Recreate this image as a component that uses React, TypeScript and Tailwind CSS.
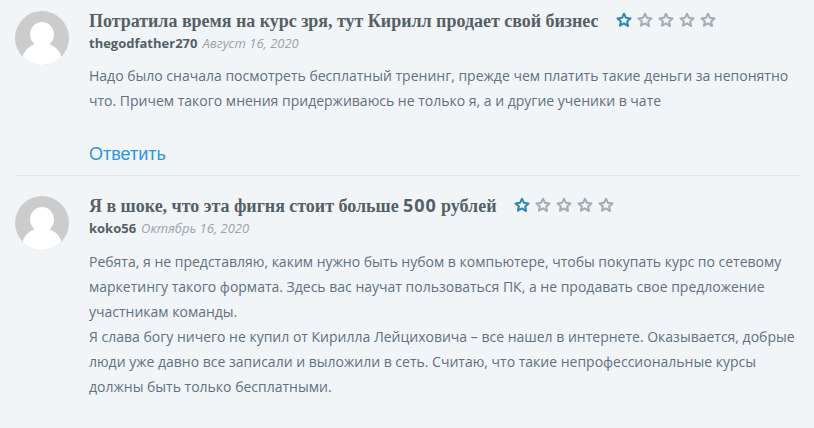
import React from 'react';

const Avatar = () => (
  <div className="w-[54px] h-[54px] shrink-0 rounded-full overflow-hidden bg-[#cccccc]">
    <svg width="54" height="54" viewBox="0 0 54 54">
      <ellipse cx="27" cy="23.5" rx="12" ry="12.5" fill="#fff" />
      <ellipse cx="27" cy="50" rx="20" ry="18" fill="#fff" />
    </svg>
  </div>
);

const Star = ({ filled = false }: { filled?: boolean }) => (
  <svg width="16" height="16" viewBox="0 0 24 24" fill="none" stroke={filled ? '#2f86b0' : '#a3adb3'} strokeWidth="3" strokeLinejoin="round">
    <path d="M12 2.5l2.9 6.3 6.9.8-5.1 4.7 1.4 6.8L12 17.1l-6.1 3.5 1.4-6.8L2.2 9.6l6.9-.8z" />
  </svg>
);

const Stars = () => (
  <div className="flex gap-[5px] mb-[2px]">
    <Star filled />
    <Star />
    <Star />
    <Star />
    <Star />
  </div>
);

interface ReviewProps {
  title: React.ReactNode;
  author: string;
  date: string;
  bodyGap: string;
  children: React.ReactNode;
}

const Review = ({ title, author, date, bodyGap, children }: ReviewProps) => (
  <div className="flex gap-5">
    <Avatar />
    <div className="flex-1">
      <div className="flex items-center h-[20px] gap-[18px]">
        <h3 className="font-['Liberation_Serif',serif] font-bold text-[18px] tracking-[-0.03px] text-[#555f66] whitespace-nowrap">{title}</h3>
        <Stars />
      </div>
      <div className={`h-[20px] mt-[2px] flex items-center gap-[5px] text-[13px] whitespace-nowrap ${bodyGap}`}>
        <span className="font-bold text-[#555f66]">{author}</span>
        <em className="text-[#9aa3a9]">{date}</em>
      </div>
      {children}
    </div>
  </div>
);

export default function App() {
  return (
    <div className="w-[814px] h-[428px] overflow-hidden bg-[#f1f5f8] pl-[15px] pr-[14px] pt-[11px] font-['Open_Sans',sans-serif] text-[14px] leading-[25px] text-[#627080]">
      <Review
        title="Потратила время на курс зря, тут Кирилл продает свой бизнес"
        author="thegodfather270"
        date="Август 16, 2020"
        bodyGap="mb-[10px]"
      >
        <p>
          Надо было сначала посмотреть бесплатный тренинг, прежде чем платить такие деньги за непонятно<br />
          что. Причем такого мнения придерживаюсь не только я, а и другие ученики в чате
        </p>
        <a className="block mt-[29px] text-[18px] leading-[25px] text-[#2b97dc] font-['Liberation_Sans',sans-serif]">Ответить</a>
      </Review>
      <div className="h-px bg-[#e3e7eb] mt-[8px] mb-[20px]" />
      <Review
        title={<>Я в шоке, что эта фигня стоит больше <span className="font-['Open_Sans',sans-serif] tracking-[0.9px]">500</span> рублей</>}
        author="koko56"
        date="Октябрь 16, 2020"
        bodyGap="mb-[11px]"
      >
        <p>
          Ребята, я не представляю, каким нужно быть нубом в компьютере, чтобы покупать курс по сетевому<br />
          маркетингу такого формата. Здесь вас научат пользоваться ПК, а не продавать свое предложение<br />
          участникам команды.<br />
          Я слава богу ничего не купил от Кирилла Лейциховича – все нашел в интернете. Оказывается, добрые<br />
          люди уже давно все записали и выложили в сеть. Считаю, что такие непрофессиональные курсы<br />
          должны быть только бесплатными.
        </p>
      </Review>
    </div>
  );
}
